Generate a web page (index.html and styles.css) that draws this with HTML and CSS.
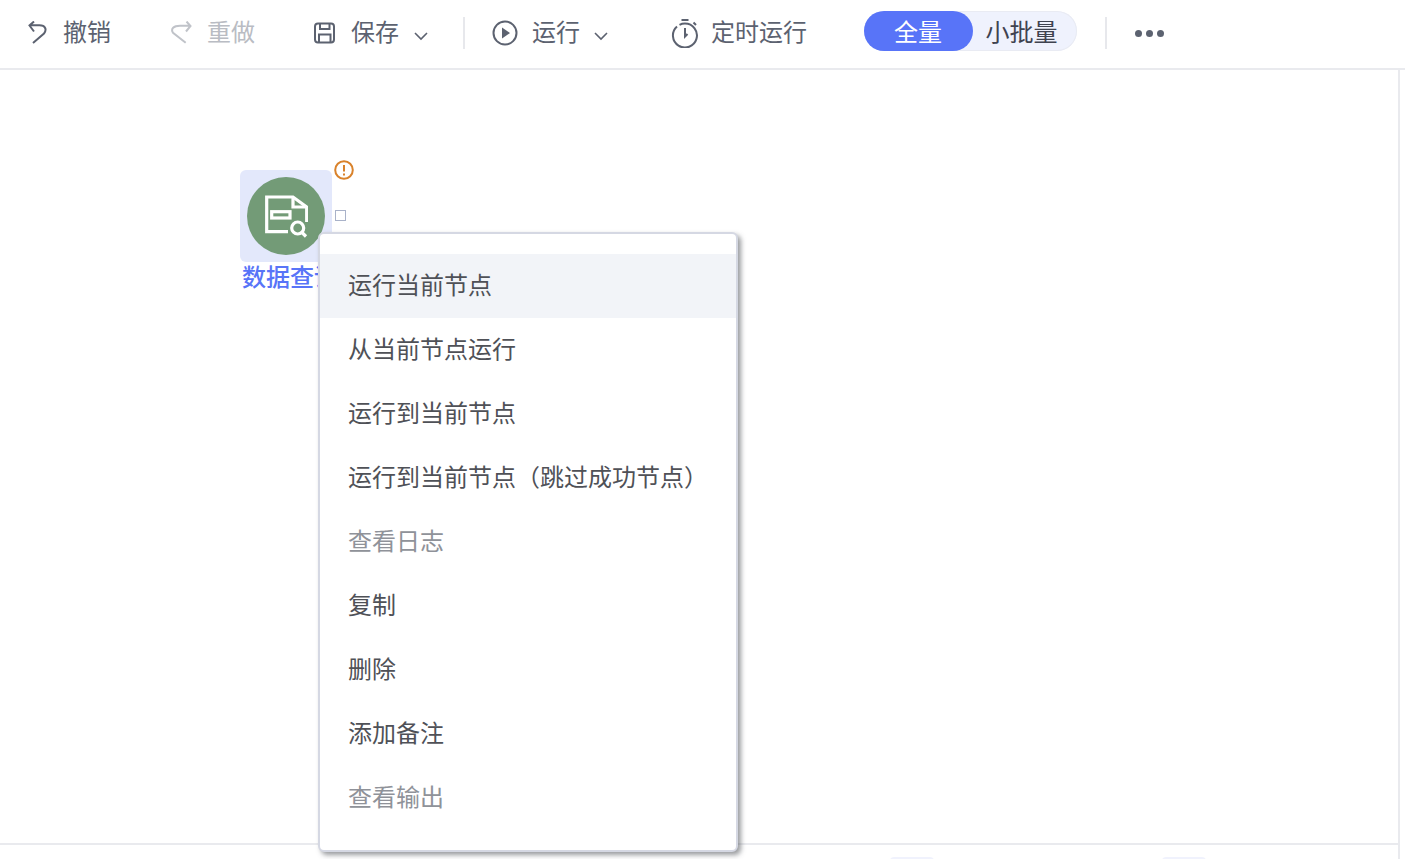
FILE: index.html
```html
<!DOCTYPE html>
<html lang="zh-CN">
<head>
<meta charset="utf-8">
<title>数据查询</title>
<link rel="stylesheet" href="styles.css">
</head>
<body>
<div class="app">
  <header class="toolbar">
    <div class="tool tool-undo">
      <svg class="ico" viewBox="0 0 24 24"><path d="M8 .5 3.500 4.500 8 10.500M3.500 4.300h10c6 0 7.500 4.500 4.500 8.200L7 22"/></svg>
      <span class="txt">撤销</span>
    </div>
    <div class="tool tool-redo disabled">
      <svg class="ico" viewBox="0 0 24 24"><path d="M16.500 .5 20.500 5 16 10.500M20.500 4.700H10C3.500 4.700 .5 8 3 11.700L15.700 21.700"/></svg>
      <span class="txt">重做</span>
    </div>
    <div class="tool tool-save">
      <svg class="ico" viewBox="0 0 24 24"><rect x="2" y="2.500" width="19" height="19" rx="3"/><path d="M7 3v5h9.500V3M6 21v-7.500h11.500V21"/></svg>
      <span class="txt">保存</span>
      <svg class="caret" viewBox="0 0 14 14"><path d="m1 4 6 6 6-6"/></svg>
    </div>
    <i class="sep sep-a"></i>
    <div class="tool tool-run">
      <svg class="ico ico-run" viewBox="0 0 26 26"><circle cx="13" cy="13" r="11.500"/><path class="fill" d="M10 7.500v11l8-5.500z"/></svg>
      <span class="txt">运行</span>
      <svg class="caret caret-run" viewBox="0 0 14 14"><path d="m1 4 6 6 6-6"/></svg>
    </div>
    <div class="tool tool-timer">
      <svg class="ico ico-timer" viewBox="0 0 28 30"><path d="M6 8.500a12 12 0 1 0 8-3 12 12 0 0 0-5.500 1.300"/><path d="M10.500 2h7M14 10v8.500l2.500-2.500M22.500 4.500l2.500 2.500"/></svg>
      <span class="txt">定时运行</span>
    </div>
    <div class="switch">
      <span class="seg seg-on">全量</span>
      <span class="seg seg-off">小批量</span>
    </div>
    <i class="sep sep-b"></i>
    <div class="more"><b></b><b></b><b></b></div>
  </header>

  <main class="canvas">
    <div class="node">
      <div class="node-box">
        <div class="node-circle">
          <svg class="node-ico" viewBox="0 0 44 44"><path d="M42.700 27V12L29 2H2.700v34.700H24"/><path d="M29 2v10h13.700"/><rect x="7.700" y="16.700" width="18.300" height="6.300"/><circle cx="33.700" cy="33" r="6"/><path d="m38 37.500 4 4"/></svg>
        </div>
      </div>
      <div class="node-label">数据查询</div>
      <svg class="warn" viewBox="0 0 20 20"><circle cx="10" cy="10" r="8.800"/><path d="M10 5v6.500M10 13.500v2"/></svg>
      <i class="port"></i>
    </div>

    <ul class="menu">
      <li class="item active">运行当前节点</li>
      <li class="item">从当前节点运行</li>
      <li class="item">运行到当前节点</li>
      <li class="item">运行到当前节点（跳过成功节点）</li>
      <li class="item off">查看日志</li>
      <li class="item">复制</li>
      <li class="item">删除</li>
      <li class="item">添加备注</li>
      <li class="item off">查看输出</li>
    </ul>
  </main>

  <footer class="bottom">
    <i class="tab tab-a"></i>
    <i class="tab tab-b"></i>
  </footer>
</div>
</body>
</html>
```
FILE: styles.css
```css
* { box-sizing: border-box; }
html, body { margin: 0; height: 100%; overflow: hidden; background: #fff; }
body { font-family: "Noto Sans CJK SC", "Noto Sans", sans-serif; color: #4a4f5c; }
.app { width: 1405px; height: 859px; display: flex; flex-direction: column; }

.toolbar {
  height: 70px; flex: none; display: flex; align-items: center;
  border-bottom: 2px solid #e9eaee; padding: 0 0 4px 26px;
  font-size: 24px; color: #5c6270;
}
.tool { display: flex; align-items: center; line-height: 32px; }
.txt { margin-top: -2px; }
.ico { width: 24px; height: 24px; margin-top: 2px; fill: none; stroke: #5c6270; stroke-width: 2; flex: none; }
.tool-undo .ico { margin-right: 13px; }
.tool-undo { width: 144px; }
.tool-redo { width: 143px; }
.tool-redo .ico { margin-right: 13px; stroke: #c0c3c9; }
.disabled { color: #b9bcc3; }
.tool-save .ico { margin-right: 14px; }
.caret { width: 14px; height: 14px; margin: 7px 0 0 15px; fill: none; stroke: #5c6270; stroke-width: 1.600; }
.caret-run { margin-left: 14px; }
.sep { width: 2px; height: 32px; margin-top: 2px; background: #e7e8ec; flex: none; }
.sep-a { margin-left: 35px; }
.tool-run { margin-left: 27px; }
.ico-run { width: 26px; height: 26px; margin-right: 14px; }
.ico-run .fill { fill: #5c6270; stroke: none; }
.tool-timer { margin-left: 63px; }
.ico-timer { width: 28px; height: 30px; margin-right: 12px; }
.switch {
  display: flex; margin: -2px 0 0 57px; height: 40px; width: 213px;
  background: #eff2fd; border-radius: 20px; box-shadow: inset 0 0 0 1px #e9ebf3;
  font-size: 24px; color: #3f4350;
}
.seg { display: flex; align-items: center; justify-content: center; flex: 1; padding-right: 1px; line-height: 40px; }
.seg-on { flex: none; width: 109px; background: #5874f8; color: #fff; border-radius: 20px; }
.seg-off { padding-right: 7px; }
.sep-b { margin-left: 28px; }
.more { display: flex; gap: 4px; margin: 2px 0 0 28px; }
.more b { width: 7px; height: 7px; border-radius: 50%; background: #5c6270; }

.canvas { flex: 1; position: relative; border-right: 2px solid #e9eaee; margin-right: 5px; }
.node { position: absolute; left: 240px; top: 100px; width: 92px; }
.node-box { width: 92px; height: 92px; background: #e3e8fb; border-radius: 6px; display: flex; align-items: center; justify-content: center; }
.node-circle { width: 78px; height: 78px; border-radius: 50%; background: #739b77; display: flex; align-items: center; justify-content: center; }
.node-ico { width: 44px; height: 44px; fill: none; stroke: #fff; stroke-width: 3.200; margin-top: 1px; }
.node-label { font-size: 24px; line-height: 28px; padding-left: 2px; font-weight: 500; color: #5874f8; white-space: nowrap; }
.warn { position: absolute; left: 94px; top: -10px; width: 20px; height: 20px; fill: none; stroke: #d9822b; stroke-width: 2; }
.port { position: absolute; left: 95px; top: 40px; width: 11px; height: 11px; border: 1px solid #a9b2c9; background: #fff; }

.menu {
  position: absolute; left: 318px; top: 162px; width: 420px; height: 620px;
  margin: 0; padding: 20px 0 0; list-style: none;
  background: #fff; border: 2px solid #d5d8e3; border-radius: 6px;
  box-shadow: 3px 3px 5px rgba(70, 72, 78, .55);
  font-size: 24px; color: #4f5157; z-index: 2;
}
.item { height: 64px; line-height: 60px; padding-left: 28px; white-space: nowrap; }
.item.active { background: #f2f4f8; }
.item.off { color: #8f9299; }

.bottom { height: 16px; flex: none; position: relative; border-top: 2px solid #e9eaee; border-right: 2px solid #e9eaee; margin-right: 5px; }
.tab { position: absolute; top: 12px; width: 44px; height: 8px; background: #f0f2fd; border-radius: 4px 4px 0 0; }
.tab-a { left: 890px; }
.tab-b { left: 1162px; }
```
